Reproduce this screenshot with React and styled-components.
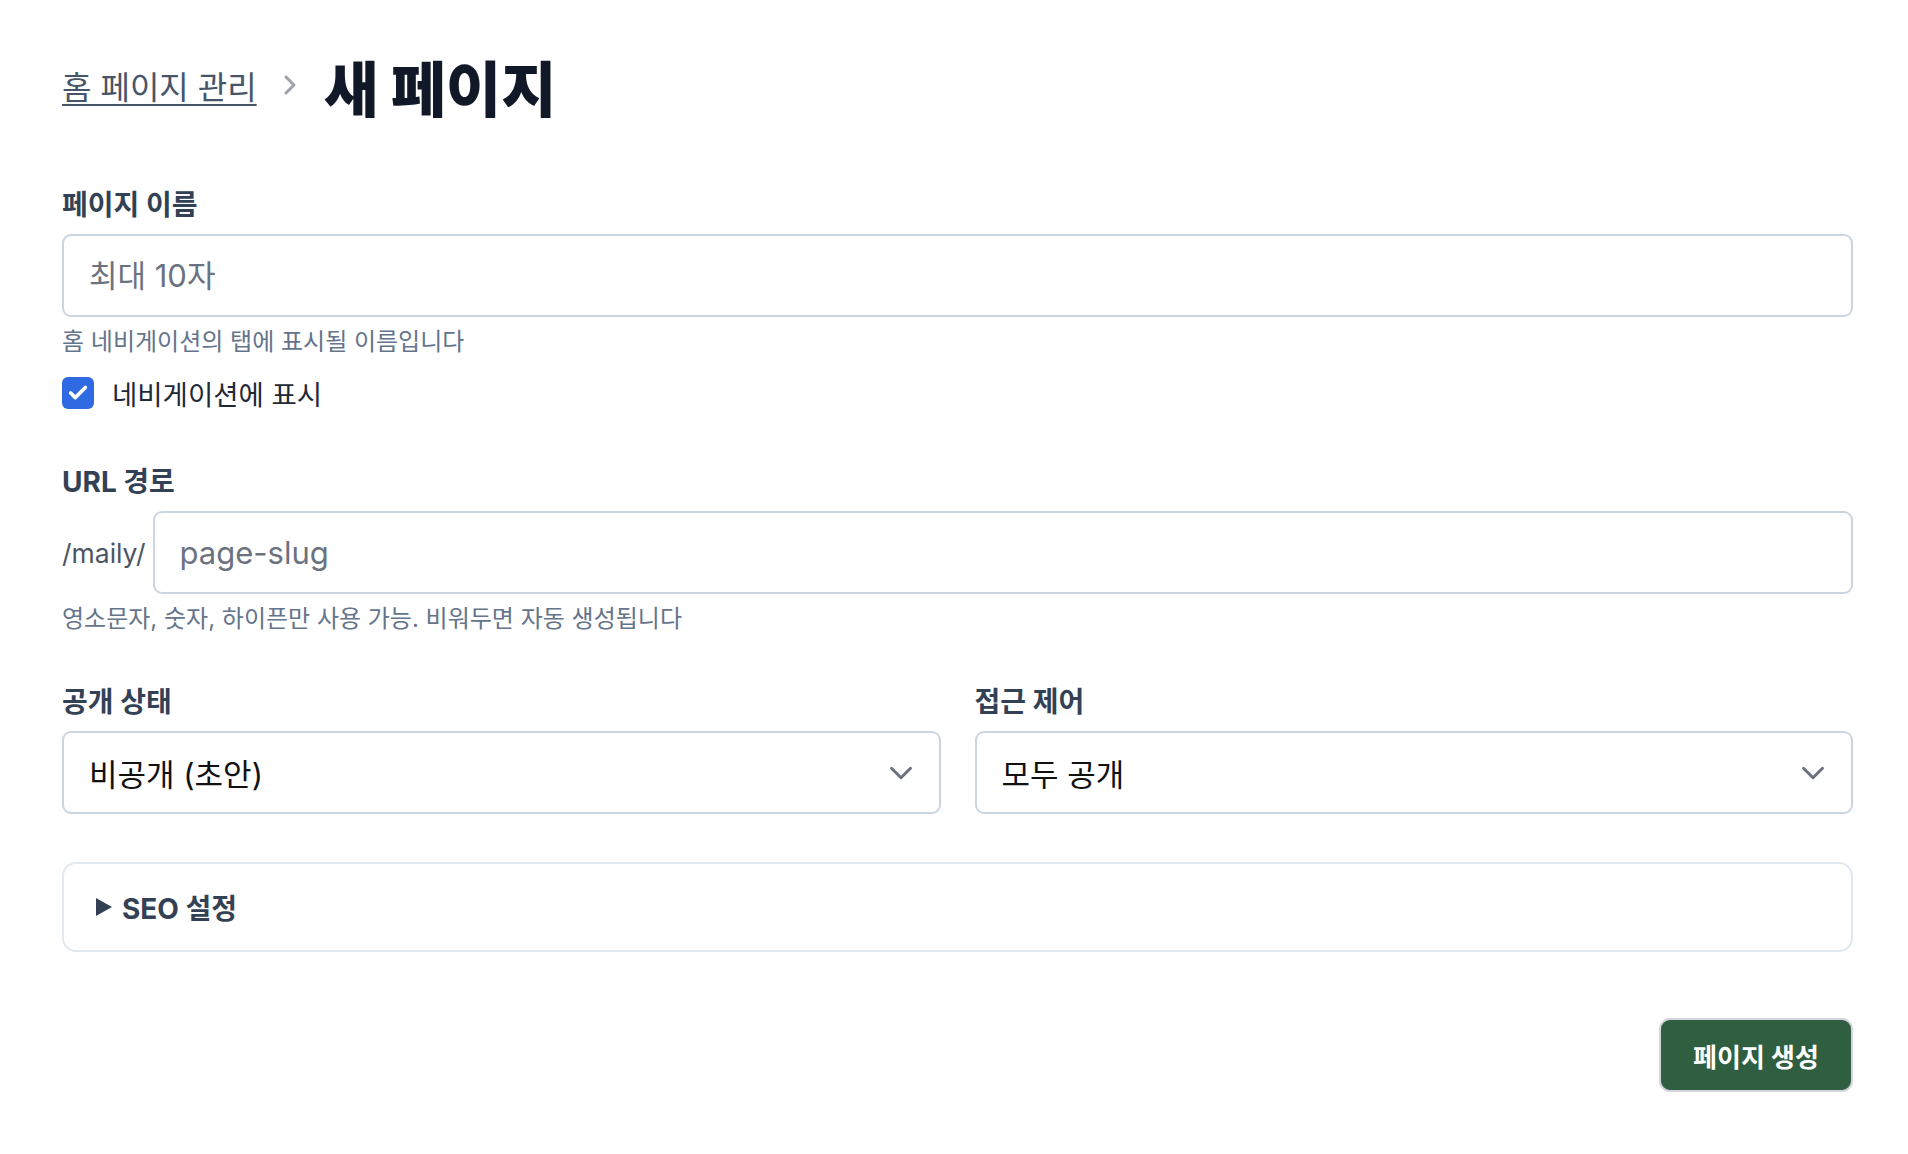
import React, { useState } from 'react';
import styled, { createGlobalStyle } from 'styled-components';
import { Check, ChevronDown, ChevronRight } from 'lucide-react';

const GlobalStyle = createGlobalStyle`
  * { box-sizing: border-box; }
  body {
    margin: 0;
    background: #ffffff;
    font-family: Inter, "Noto Sans CJK KR", sans-serif;
    color: #111827;
  }
`;

function App() {
  const [showNav, setShowNav] = useState(true);

  return (
    <>
      <GlobalStyle />
      <Page>
        <Header>
          <BackLink href='#'>홈 페이지 관리</BackLink>
          <Crumb>
            <ChevronRight size={32} strokeWidth={2.3} />
          </Crumb>
          <Title>새 페이지</Title>
        </Header>

        <Form>
          <Field>
            <Label>페이지 이름</Label>
            <TextInput placeholder='최대 10자' />
            <Hint>홈 네비게이션의 탭에 표시될 이름입니다</Hint>
            <CheckRow onClick={() => setShowNav(!showNav)}>
              <CheckBox checked={showNav}>
                {showNav && <Check size={22} strokeWidth={4} color='#fff' />}
              </CheckBox>
              <CheckText>네비게이션에 표시</CheckText>
            </CheckRow>
          </Field>

          <Field $top={54}>
            <Label>URL 경로</Label>
            <SlugRow>
              <Prefix>/maily/</Prefix>
              <TextInput placeholder='page-slug' />
            </SlugRow>
            <Hint>영소문자, 숫자, 하이픈만 사용 가능. 비워두면 자동 생성됩니다</Hint>
          </Field>

          <SelectGrid>
            <Field>
              <Label>공개 상태</Label>
              <SelectBox>
                <span>비공개 (초안)</span>
                <ChevronDown size={38} strokeWidth={1.9} color='#6b7280' />
              </SelectBox>
            </Field>
            <Field>
              <Label>접근 제어</Label>
              <SelectBox>
                <span>모두 공개</span>
                <ChevronDown size={38} strokeWidth={1.9} color='#6b7280' />
              </SelectBox>
            </Field>
          </SelectGrid>

          <Seo>
            <summary>SEO 설정</summary>
          </Seo>

          <Actions>
            <SubmitButton type='button'>페이지 생성</SubmitButton>
          </Actions>
        </Form>
      </Page>
    </>
  );
}

export default App;

const Page = styled.div`
  padding: 50px 55px 60px 62px;
`;

const Header = styled.div`
  display: flex;
  align-items: center;
  height: 70px;
`;

const BackLink = styled.a`
  font-size: 32px;
  color: #475569;
  text-decoration: underline;
  text-decoration-thickness: 2px;
  text-underline-offset: 5px;
`;

const Crumb = styled.span`
  display: flex;
  align-items: center;
  color: #9ca3af;
  margin: 0 18px 0 17px;
`;

const Title = styled.h1`
  margin: 0;
  font-size: 60px;
  font-weight: 900;
  color: #111827;
`;

const Form = styled.form`
  margin-top: 70px;
  display: flex;
  flex-direction: column;
`;

const Field = styled.div`
  display: flex;
  flex-direction: column;
  margin-top: ${(p) => (p.$top ? `${p.$top}px` : '0')};
`;

const Label = styled.label`
  font-size: 28px;
  line-height: 30px;
  font-weight: 700;
  color: #334155;
  margin-bottom: 14px;
`;

const TextInput = styled.input`
  flex: 1 1 auto;
  min-width: 0;
  width: 100%;
  height: 83px;
  padding: 0 25px;
  border: 2px solid #cbd5e1;
  border-radius: 9px;
  font-family: inherit;
  font-size: 31px;
  color: #111827;
  outline: none;
  &::placeholder {
    color: #6b7280;
  }
`;

const Hint = styled.p`
  margin: 11px 0 0;
  font-size: 24px;
  line-height: 28px;
  color: #64748b;
`;

const CheckRow = styled.div`
  display: flex;
  align-items: center;
  gap: 18px;
  margin-top: 17px;
  cursor: pointer;
`;

const CheckBox = styled.span`
  width: 32px;
  height: 32px;
  border-radius: 6px;
  display: flex;
  align-items: center;
  justify-content: center;
  background: ${(p) => (p.checked ? '#2f6ae3' : '#fff')};
  border: ${(p) => (p.checked ? 'none' : '2px solid #cbd5e1')};
`;

const CheckText = styled.span`
  font-size: 27.5px;
  color: #1f2937;
`;

const SlugRow = styled.div`
  display: flex;
  align-items: center;
  gap: 7px;
`;

const Prefix = styled.span`
  font-size: 26.5px;
  color: #4b5563;
`;

const SelectGrid = styled.div`
  display: grid;
  grid-template-columns: 1fr 1fr;
  gap: 34px;
  margin-top: 54px;
`;

const SelectBox = styled.div`
  height: 83px;
  display: flex;
  align-items: center;
  justify-content: space-between;
  padding: 0 19px 0 25px;
  border: 2px solid #cbd5e1;
  border-radius: 9px;
  font-size: 31px;
  color: #111111;
`;

const Seo = styled.details`
  margin-top: 48px;
  height: 90px;
  border: 2px solid #e2e8f0;
  border-radius: 14px;
  padding: 0 32px;
  display: flex;
  align-items: center;

  summary {
    height: 86px;
    display: flex;
    align-items: center;
    list-style: none;
    font-size: 28px;
    font-weight: 700;
    color: #334155;
    cursor: pointer;
  }
  summary::-webkit-details-marker {
    display: none;
  }
  summary::before {
    content: '';
    margin-right: 10px;
    border-left: 16px solid #334155;
    border-top: 9px solid transparent;
    border-bottom: 9px solid transparent;
  }
`;

const Actions = styled.div`
  display: flex;
  justify-content: flex-end;
  margin-top: 66px;
`;

const SubmitButton = styled.button`
  width: 194px;
  height: 74px;
  border: 2px solid #d4d4dc;
  border-radius: 11px;
  background: #2f5e41;
  color: #ffffff;
  font-family: inherit;
  font-size: 26px;
  font-weight: 700;
  cursor: pointer;
`;
